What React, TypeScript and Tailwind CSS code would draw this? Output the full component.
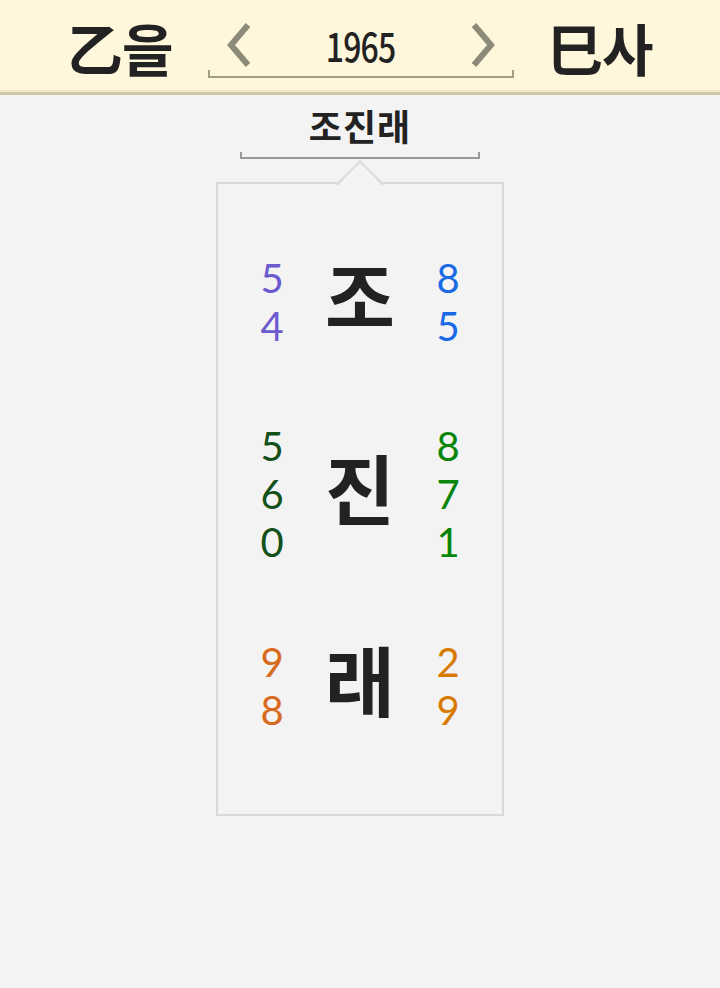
import React from "react";

const KR = { fontFamily: '"Noto Sans CJK KR", "Noto Sans", sans-serif' };
const NUM = { fontFamily: 'Lato, "Noto Sans", sans-serif' };

function Chevron({ dir }: { dir: "left" | "right" }) {
  return (
    <svg width="28" height="44" viewBox="0 0 28 44" className="shrink-0">
      <polyline
        points={dir === "left" ? "24,2 7,22 24,42" : "4,2 21,22 4,42"}
        fill="none"
        stroke="#8c8a78"
        strokeWidth="6"
        strokeLinecap="butt"
        strokeLinejoin="miter"
      />
    </svg>
  );
}

type Row = { ch: string; left: string[]; right: string[]; lc: string; rc: string };

const rows: Row[] = [
  { ch: "조", left: ["5", "4"], right: ["8", "5"], lc: "text-[#6a5acd]", rc: "text-[#1a6ae6]" },
  { ch: "진", left: ["5", "6", "0"], right: ["8", "7", "1"], lc: "text-[#13501a]", rc: "text-[#08850a]" },
  { ch: "래", left: ["9", "8"], right: ["2", "9"], lc: "text-[#d86a20]", rc: "text-[#d87a00]" },
];

function Nums({ items, cls }: { items: string[]; cls: string }) {
  return (
    <div className={`w-[40px] flex flex-col items-center ${cls}`} style={NUM}>
      {items.map((n, i) => (
        <div key={i} className="h-[48px] text-[40px] leading-[48px] font-normal">
          {n}
        </div>
      ))}
    </div>
  );
}

export default function App() {
  return (
    <div className="w-[720px] min-h-[988px] bg-[#f3f3f3]" style={KR}>
      {/* Header */}
      <div className="h-[90px] bg-[#fff7db] flex items-center justify-center gap-[33px]">
        <div className="w-[108px] text-[56px] font-bold text-[#222] leading-none tracking-[-1px] pt-[4px]">乙을</div>
        <div className="w-[306px] h-[90px] flex flex-col">
          <div className="flex-1 flex items-center justify-between px-[16px] pt-[20px]">
            <Chevron dir="left" />
            <div className="text-[40px] font-medium text-[#222] leading-none scale-x-[0.8] tracking-[-1px]">1965</div>
            <Chevron dir="right" />
          </div>
          <div className="h-[8px] border-x-2 border-b-2 border-[#a29e88] mb-[12px]" />
        </div>
        <div className="w-[106px] text-[56px] font-bold text-[#222] leading-none tracking-[-1px] pt-[4px]">巳사</div>
      </div>
      <div className="h-[2px] bg-[#efe7c6]" />
      <div className="h-[3px] bg-[#cdc6aa]" />

      {/* Name */}
      <div className="flex flex-col items-center">
        <div className="mt-[7px] text-[36px] font-bold text-[#222] leading-[46px] tracking-[1px]">조진래</div>
        <div className="mt-[4px] w-[240px] h-[7px] border-x-2 border-b-2 border-[#9a9a9a]" />

        {/* Card */}
        <div className="relative mt-[23px] w-[288px] h-[634px] border-2 border-[#d9d9d9] bg-[#f3f3f3]">
          <div className="absolute left-1/2 top-[-17px] w-[34px] h-[34px] -translate-x-1/2 rotate-45 border-l-2 border-t-2 border-[#d9d9d9] bg-[#f3f3f3]" />
          <div className="relative pt-[22px]">
            {rows.map((r, i) => (
              <div key={i} className="h-[192px] flex items-center justify-center">
                <Nums items={r.left} cls={r.lc} />
                <div className="w-[136px] text-center text-[76px] font-bold text-[#222] leading-none pb-[16px]">{r.ch}</div>
                <Nums items={r.right} cls={r.rc} />
              </div>
            ))}
          </div>
        </div>
      </div>
    </div>
  );
}
